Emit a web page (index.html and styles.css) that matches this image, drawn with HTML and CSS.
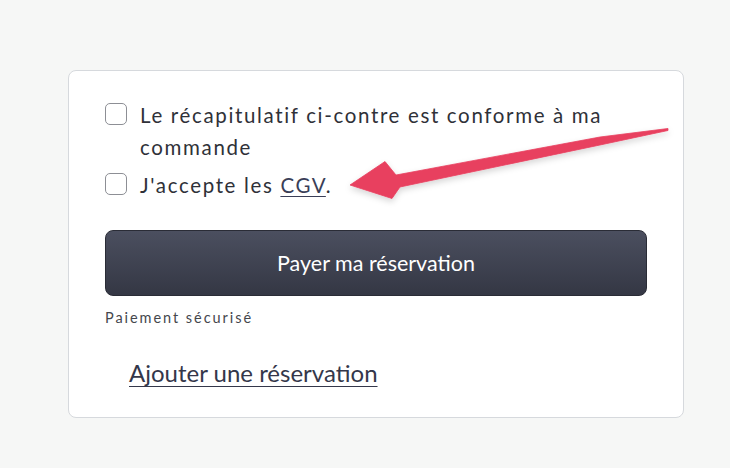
FILE: index.html
```html
<!DOCTYPE html>
<html>
<head>
    <title>Paiement</title>
    <link rel="stylesheet" href="styles.css">
</head>
<body>
<div class="page">
    <div class="card">
        <label class="check">
            <span class="box"></span>
            <span class="label-text">Le récapitulatif ci-contre est conforme à ma commande</span>
        </label>
        <label class="check">
            <span class="box"></span>
            <span class="label-text">J'accepte les <a href="#">CGV</a>.</span>
        </label>

        <button class="pay">Payer ma réservation</button>
        <div class="secure">Paiement sécurisé</div>

        <a class="add" href="#">Ajouter une réservation</a>
    </div>

    <!-- fleche annotation -->
    <svg class="arrow" width="730" height="468" viewBox="0 0 730 468">
        <defs>
            <filter id="ombre" x="-10%" y="-50%" width="120%" height="200%">
                <feDropShadow dx="0" dy="3" stdDeviation="3" flood-color="#000" flood-opacity="0.16"/>
            </filter>
        </defs>
        <polygon points="668,128.5 600,137 396,175 385,161.5 350,185 392,198.5 400,187 600,145 668,130.5" fill="#e8405f" stroke="#e8405f" stroke-width="0.8" stroke-linejoin="round" filter="url(#ombre)"/>
    </svg>
</div>
</body>
</html>
```

FILE: styles.css
```css
body {
    margin: 0;
    background: #f6f7f6;
    font-family: 'Lato', 'Noto Sans', sans-serif;
    color: #2f3138;
}
.page {
    position: relative;
    width: 730px;
    height: 468px;
    padding: 70px 0 0 68px;
    box-sizing: border-box;
}
/* carte principale */
.card {
    width: 616px;
    height: 348px;
    box-sizing: border-box;
    background: #fff;
    border: 1px solid #d6d9dd;
    border-radius: 8px;
    padding: 28px 37px 0 36px;
}
.check {
    display: flex;
    align-items: flex-start;
    gap: 13px;
    font-size: 20.5px;
    line-height: 32px;
    letter-spacing: 1.65px;
    padding-right: 10px;
}
.check + .check {
    margin-top: 6px;
}
.box {
    flex: none;
    width: 22px;
    height: 22px;
    margin-top: 4px;
    border: 1.5px solid #8d8f95;
    border-radius: 5px;
    box-sizing: border-box;
    background: #fff;
}
.label-text a {
    color: #3a3e57;
    text-decoration: underline;
    text-underline-offset: 3px;
    text-decoration-thickness: 1px;
}
/* bouton payer */
.pay {
    display: block;
    width: 542px;
    height: 66px;
    margin-top: 29px;
    border: 1px solid #2a2c36;
    border-radius: 8px;
    background: linear-gradient(#4b4f5f, #343744);
    color: #fff;
    font-family: 'Lato', 'Noto Sans', sans-serif;
    font-size: 21.5px;
    cursor: pointer;
}
.secure {
    margin-top: 13px;
    font-size: 14.5px;
    line-height: 18px;
    letter-spacing: 1.95px;
    color: #45474d;
}
.add {
    display: inline-block;
    margin: 31px 0 0 24px;
    font-size: 24px;
    line-height: 30px;
    color: #34374a;
    text-decoration: underline;
    text-underline-offset: 4px;
    text-decoration-thickness: 1.2px;
}
.arrow {
    position: absolute;
    left: 0;
    top: 0;
    pointer-events: none;
}
```
